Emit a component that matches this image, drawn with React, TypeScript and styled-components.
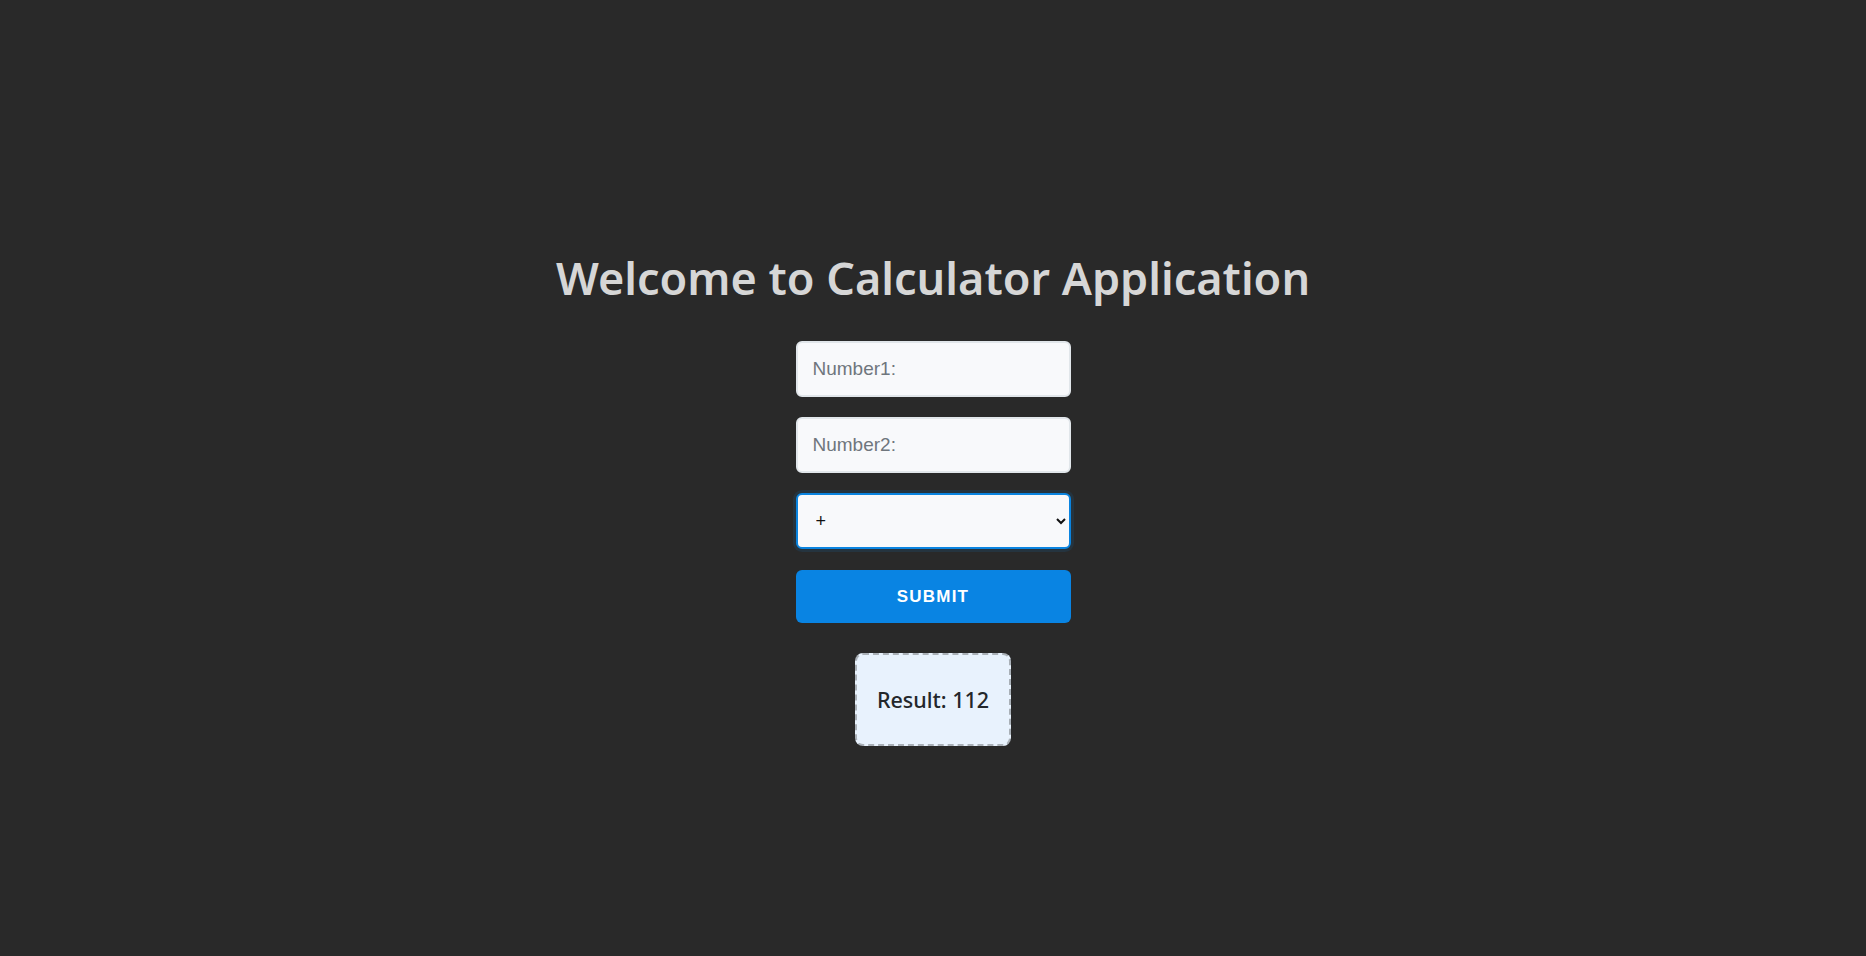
import React, { useState } from "react";
import styled, { createGlobalStyle } from "styled-components";

const GlobalStyle = createGlobalStyle`
  * {
    box-sizing: border-box;
  }

  body {
    margin: 0;
    background-color: #292929;
    font-family: "Noto Sans", "Open Sans", sans-serif;
  }
`;

const Page = styled.div`
  min-height: 100vh;
  display: flex;
  flex-direction: column;
  align-items: center;
  justify-content: center;
`;

const Title = styled.h1`
  margin: 36px 0 31px;
  font-size: 45px;
  line-height: 64px;
  font-weight: 600;
  color: #d6d6d6;
`;

const Form = styled.form`
  width: 275px;
  display: flex;
  flex-direction: column;
  gap: 20px;
`;

const Field = styled.input`
  width: 100%;
  height: 56px;
  padding: 0 15px;
  border: 2px solid #e1e6ea;
  border-radius: 6px;
  background-color: #f8f9fb;
  font-family: "Liberation Sans", Arial, sans-serif;
  font-size: 19px;
  color: #212529;
  outline: none;

  &::placeholder {
    color: #6f767d;
  }
`;

const Operator = styled.select`
  width: 100%;
  height: 56px;
  padding: 0 8px 0 14px;
  border: 2px solid #0a84e0;
  border-radius: 6px;
  background-color: #f8f9fb;
  box-shadow: 0 0 0 3px rgba(10, 132, 224, 0.12);
  font-family: "Liberation Sans", Arial, sans-serif;
  font-size: 18px;
  color: #111;
  outline: none;
`;

const SubmitButton = styled.button`
  margin-top: 1px;
  width: 100%;
  height: 53px;
  border: none;
  border-radius: 6px;
  background-color: #0984e3;
  color: #ffffff;
  font-family: "Liberation Sans", Arial, sans-serif;
  font-size: 17px;
  font-weight: 700;
  letter-spacing: 1.2px;
  text-transform: uppercase;
  cursor: pointer;
`;

const ResultBox = styled.div`
  margin-top: 30px;
  width: 156px;
  height: 93px;
  display: flex;
  align-items: center;
  justify-content: center;
  border: 2px dashed #a9b0b7;
  border-radius: 8px;
  background-color: #e8f2fd;
  color: #23272b;
  font-size: 21.5px;
  font-weight: 500;
`;

export default function App() {
  const [num1, setNum1] = useState("");
  const [num2, setNum2] = useState("");
  const [op, setOp] = useState("+");
  const [result, setResult] = useState<number>(112);

  function handleSubmit(e: React.FormEvent) {
    e.preventDefault();
    const a = parseFloat(num1);
    const b = parseFloat(num2);
    if (isNaN(a) || isNaN(b)) return;
    if (op === "+") setResult(a + b);
    if (op === "-") setResult(a - b);
    if (op === "*") setResult(a * b);
    if (op === "/") setResult(a / b);
  }

  return (
    <>
      <GlobalStyle />
      <Page>
        <Title>Welcome to Calculator Application</Title>
        <Form onSubmit={handleSubmit}>
          <Field
            type="number"
            placeholder="Number1:"
            value={num1}
            onChange={(e) => setNum1(e.target.value)}
          />
          <Field
            type="number"
            placeholder="Number2:"
            value={num2}
            onChange={(e) => setNum2(e.target.value)}
          />
          <Operator value={op} onChange={(e) => setOp(e.target.value)}>
            <option value="+">+</option>
            <option value="-">-</option>
            <option value="*">*</option>
            <option value="/">/</option>
          </Operator>
          <SubmitButton type="submit">Submit</SubmitButton>
        </Form>
        <ResultBox>Result: {result}</ResultBox>
      </Page>
    </>
  );
}
